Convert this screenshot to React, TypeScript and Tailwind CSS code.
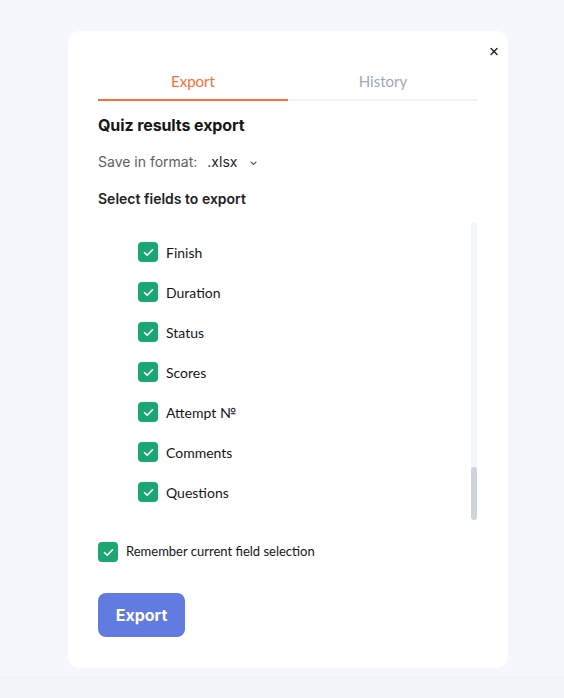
import { X } from "lucide-react";

const fields = ["Finish", "Duration", "Status", "Scores", "Attempt №", "Comments", "Questions"];

function Check() {
  return (
    <span className="flex h-5 w-5 shrink-0 items-center justify-center rounded-[4px] bg-[#1ba672]">
      <svg width="11" height="9" viewBox="0 0 11 9" fill="none">
        <path d="M1.5 4.6 4.2 7.2 9.5 1.8" stroke="white" strokeWidth="1.6" strokeLinecap="round" strokeLinejoin="round" />
      </svg>
    </span>
  );
}

export default function App() {
  return (
    <div className="flex min-h-[698px] flex-col bg-[#f4f8fc] font-['Inter',sans-serif]">
      <div className="pt-[31px] pb-2">
        <div className="ml-[68px] flex h-[637px] w-[440px] flex-col rounded-xl bg-white px-[30px]">
          <div className="flex justify-end pt-[14px] -mr-[22px]">
            <button className="flex h-3 w-3 items-center justify-center text-[#222]">
              <X size={13} strokeWidth={2.8} />
            </button>
          </div>

          <div className="mt-[6px] flex font-['Lato',sans-serif] text-[15px]">
            <div className="flex h-[38px] flex-1 items-center justify-center border-b-2 border-[#fc6d3a] text-[#fc6d3a]">
              Export
            </div>
            <div className="flex h-[38px] flex-1 items-center justify-center border-b-2 border-[#f1f2f4] text-[#9ca7c0]">
              History
            </div>
          </div>

          <h2 className="mt-[14px] text-[16px] font-bold leading-5 tracking-[-0.1px] text-[#161616]">Quiz results export</h2>

          <div className="mt-[17px] flex items-center text-[14px] leading-5 text-[#5b5f66]">
            <span>Save in format:</span>
            <span className="ml-[10px] text-[#1f2227]">.xlsx</span>
            <svg className="ml-[13px] mt-[2px]" width="7" height="5" viewBox="0 0 7 5" fill="none">
              <path d="M1 1l2.5 2.5L6 1" stroke="#5b5f66" strokeWidth="1.1" strokeLinecap="round" strokeLinejoin="round" />
            </svg>
          </div>

          <h3 className="mt-[17px] text-[14px] font-semibold leading-5 text-[#222]">Select fields to export</h3>

          <div className="mt-[13px] flex h-[298px]">
            <div className="flex-1 pl-10 pt-[10px] font-['Lato',sans-serif] text-[14px] text-[#161616]">
              {fields.map((f) => (
                <div key={f} className="flex h-10 items-center gap-2">
                  <Check />
                  <span>{f}</span>
                </div>
              ))}
            </div>
            <div className="mr-[1px] flex w-[6px] flex-col justify-end rounded-full bg-[#f3f7fc]">
              <div className="h-[53px] rounded-full bg-[#ccd4de]" />
            </div>
          </div>

          <label className="mt-[22px] flex items-center gap-2 font-['Lato',sans-serif] text-[13px] text-[#161616]">
            <Check />
            <span>Remember current field selection</span>
          </label>

          <div className="mt-[31px]">
            <button className="h-11 w-[87px] rounded-lg bg-[#617be1] text-[16px] font-bold text-white">Export</button>
          </div>
        </div>
      </div>
      <div className="flex-1 border-t border-[#edf2f7] bg-[#f1f5f9]" />
    </div>
  );
}
